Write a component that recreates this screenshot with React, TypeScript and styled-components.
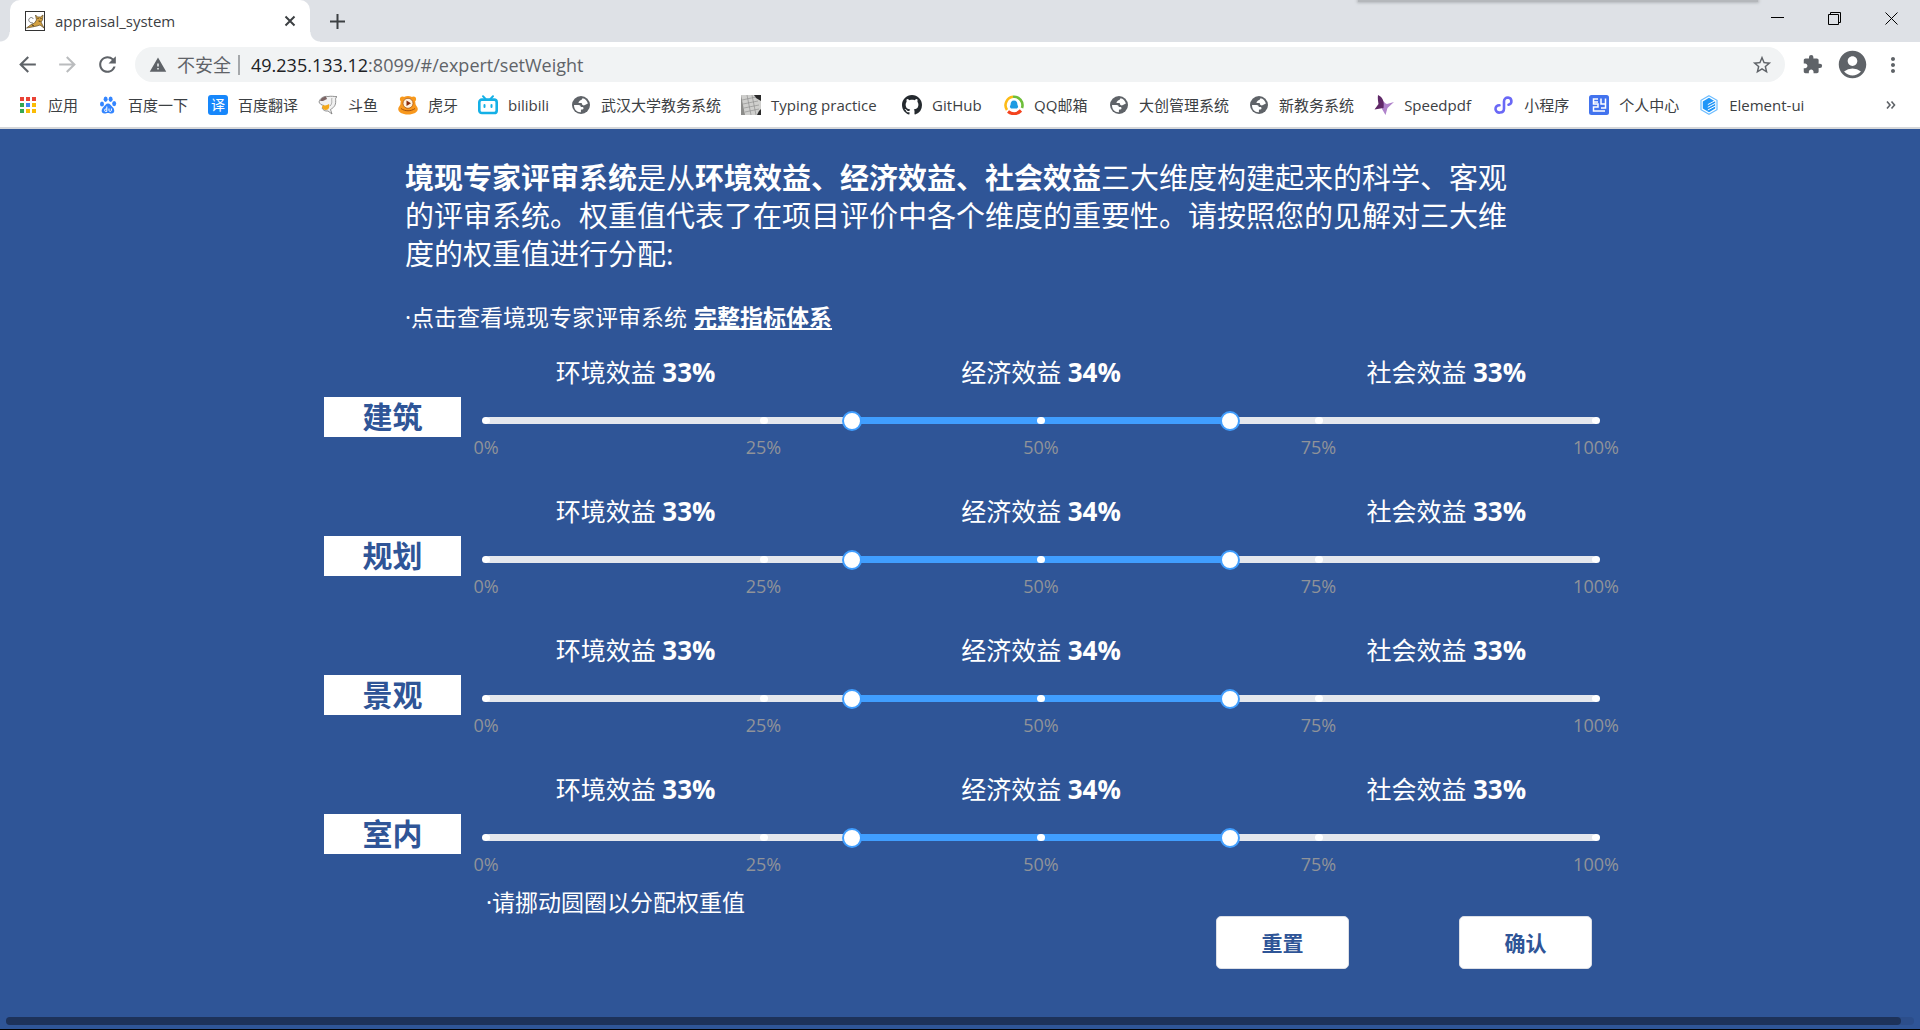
import React, { useState } from 'react';
import styled, { createGlobalStyle } from 'styled-components';
import {
  MdArrowBack,
  MdArrowForward,
  MdRefresh,
  MdWarning,
  MdStarBorder,
  MdExtension,
  MdAccountCircle,
  MdMoreVert,
} from 'react-icons/md';

const navy = '#2f5597';
const blue = '#409eff';

const GlobalStyle = createGlobalStyle`
  *, *::before, *::after { box-sizing: border-box; }
  body {
    margin: 0;
    background: ${navy};
    font-family: "Open Sans", "Noto Sans CJK SC", sans-serif;
  }
  button { font-family: inherit; }
`;

const Window = styled.div`
  display: flex;
  flex-direction: column;
  min-height: 100vh;
  border-bottom: 1px solid #000;
`;

/* ---------- browser frame ---------- */

const TabStrip = styled.div`
  position: relative;
  display: flex;
  align-items: stretch;
  height: 42px;
  padding-left: 10px;
  background: #dee1e6;
`;

const TopShade = styled.div`
  position: absolute;
  top: 0;
  right: 162px;
  width: 400px;
  height: 2px;
  background: #b4b7bb;
  box-shadow: 0 0 3px 1px #b4b7bb;
`;

const Tab = styled.div`
  position: relative;
  display: flex;
  align-items: center;
  gap: 10px;
  width: 300px;
  padding: 0 14px 0 15px;
  border-radius: 10px 10px 0 0;
  background: #fff;
  color: #3c4043;
  font-size: 15px;
  line-height: 20px;

  &::before,
  &::after {
    content: '';
    position: absolute;
    bottom: 0;
    width: 10px;
    height: 10px;
  }
  &::before {
    left: -10px;
    background: radial-gradient(circle at 0 0, transparent 9px, #fff 10px);
  }
  &::after {
    right: -10px;
    background: radial-gradient(circle at 100% 0, transparent 9px, #fff 10px);
  }
`;

const TabTitle = styled.span`
  flex: 1;
`;

const IconButton = styled.button<{ $width: number; $color?: string }>`
  display: flex;
  align-items: center;
  justify-content: center;
  flex: none;
  width: ${(p) => p.$width}px;
  padding: 0;
  border: 0;
  background: transparent;
  color: ${(p) => p.$color ?? '#5f6368'};
`;

const WindowControls = styled.div`
  display: flex;
  margin-left: auto;
  padding-bottom: 5px;
`;

const Toolbar = styled.div`
  display: flex;
  align-items: center;
  height: 42px;
  padding: 3px 8px 0 7px;
  background: #fff;
`;

const AddressBar = styled.div`
  display: flex;
  align-items: center;
  flex: 1;
  height: 35px;
  margin: 0 8px;
  padding: 0 11px 0 14px;
  border-radius: 18px;
  background: #f1f3f4;
  color: #5f6368;
  font-size: 18px;
  line-height: 24px;
`;

const Insecure = styled.span`
  margin-left: 10px;
  padding-right: 7px;
`;

const Separator = styled.span`
  width: 2px;
  height: 20px;
  margin-right: 11px;
  background: #a5a8ab;
`;

const Url = styled.span`
  flex: 1;
`;

const Host = styled.span`
  color: #202124;
`;

const BookmarkBar = styled.nav`
  display: flex;
  align-items: center;
  gap: 20px;
  height: 45px;
  padding: 0 24px 1px 18px;
  border-bottom: 2px solid #d5d7da;
  background: #fff;
`;

const Bookmark = styled.a`
  display: flex;
  align-items: center;
  gap: 10px;
  color: #3c4043;
  font-size: 15px;
  line-height: 20px;
  text-decoration: none;
  white-space: nowrap;

  svg { flex: none; }
`;

const BookmarkLabel = styled.span<{ $minWidth?: number }>`
  min-width: ${(p) => p.$minWidth ?? 30}px;
`;

const More = styled.span`
  margin-left: auto;
  display: flex;
`;

/* ---------- page ---------- */

const Page = styled.main`
  display: flex;
  flex-direction: column;
  flex: 1;
  background: ${navy};
  color: #fff;
`;

const Content = styled.div`
  flex: 1;
  width: 66.25%;
  margin: 0 auto;
  padding-top: 30px;
`;

const Intro = styled.p`
  margin: 0 80px 0 81px;
  font-size: 29px;
  line-height: 38px;
`;

const Hint = styled.p`
  margin: 29px 0 22px 81px;
  font-size: 23px;
  line-height: 30px;
`;

const HintLink = styled.a`
  margin-left: 7px;
  color: #fff;
  font-weight: 700;
  text-decoration: underline;
`;

const Rows = styled.div`
  display: flex;
  flex-direction: column;
  gap: 32px;
`;

const Row = styled.section`
  display: grid;
  grid-template-columns: 137px 1fr;
  column-gap: 25px;
  align-items: start;
`;

const Name = styled.h2`
  margin: 43px 0 0;
  background: #fff;
  color: ${navy};
  font-size: 30px;
  font-weight: 700;
  line-height: 40px;
  text-align: center;
`;

const Shares = styled.div`
  display: grid;
  grid-template-columns: repeat(3, 1fr);
  margin: 0 -53px;
  font-size: 25px;
  line-height: 36px;
  text-align: center;
`;

const Percent = styled.b`
  font-size: 26px;
`;

const Track = styled.div`
  position: relative;
  height: 7px;
  margin-top: 27px;
  border-radius: 4px;
  background: #e4e7ed;
`;

const Fill = styled.div`
  height: 7px;
  background: ${blue};
`;

const Stops = styled.div`
  position: absolute;
  inset: 0;
  display: flex;
  justify-content: space-between;
`;

const StopSlot = styled.span`
  display: flex;
  justify-content: center;
  width: 0;
`;

const Stop = styled.span`
  flex: none;
  width: 8px;
  height: 7px;
  border-radius: 4px;
  background: #fff;
`;

const Handle = styled.input`
  position: absolute;
  top: -6px;
  left: -10px;
  width: calc(100% + 20px);
  height: 20px;
  margin: 0;
  background: transparent;
  appearance: none;
  pointer-events: none;

  &::-webkit-slider-thumb {
    appearance: none;
    width: 20px;
    height: 20px;
    border: 2px solid ${blue};
    border-radius: 50%;
    background: #fff;
    pointer-events: auto;
    cursor: grab;
  }
`;

const Marks = styled.div`
  display: flex;
  justify-content: space-between;
  margin-top: 10px;
  color: #909399;
  font-size: 18px;
  line-height: 27px;
`;

const Mark = styled.span`
  display: flex;
  justify-content: center;
  width: 0;
`;

const Footer = styled.div`
  display: flex;
  align-items: flex-start;
  justify-content: space-between;
  margin-top: 9px;
  padding: 0 4px 0 162px;
`;

const Note = styled.p`
  margin: 0;
  font-size: 23px;
  line-height: 30px;
`;

const Actions = styled.div`
  display: flex;
  gap: 110px;
  padding-top: 29px;
`;

const Action = styled.button`
  width: 133px;
  height: 53px;
  padding: 0 0 2px;
  border: 1px solid #dcdfe6;
  border-radius: 5px;
  background: #fff;
  color: ${navy};
  font-size: 21px;
  font-weight: 700;
`;

const ScrollTrack = styled.div`
  height: 8px;
  margin: 0 6px 4px;
  padding-right: 13px;
  border-radius: 4px;
  background: #2c4e8b;
`;

const ScrollThumb = styled.div`
  height: 8px;
  border-radius: 4px;
  background: #1d325a;
`;

/* ---------- icons ---------- */

const Icon = ({ children, box = 20 }: { children: React.ReactNode; box?: number }) => (
  <svg width="20" height="20" viewBox={`0 0 ${box} ${box}`} aria-hidden="true">
    {children}
  </svg>
);

const TomcatIcon = () => (
  <Icon>
    <rect x=".5" y=".5" width="19" height="19" fill="#fff" stroke="#333" />
    <path d="M8 12c-3 0-5-2-4-4s4-2 4 0" fill="none" stroke="#777" />
    <path d="M1.500 17l4-3 4-2 2-3-1-5 2 2h3l2.500-2-.5 5-1.500 2 3 6-4-3-3 1-5 1z" fill="#d2a041" stroke="#5b4a2a" strokeWidth=".7" />
    <path d="M12.500 7.500h1M15.500 7.500h1M13.500 10l2 .4M7 14l2 1" stroke="#3b2d16" strokeWidth=".9" />
  </Icon>
);

const AppsIcon = () => {
  const colors = ['#ea4335', '#ea4335', '#ea4335', '#34a853', '#4285f4', '#fbbc05', '#34a853', '#fbbc05', '#fbbc05'];
  return (
    <Icon>
      {colors.map((c, i) => (
        <rect key={i} x={2 + (i % 3) * 6} y={2 + Math.floor(i / 3) * 6} width="4" height="4" fill={c} />
      ))}
    </Icon>
  );
};

const BaiduIcon = () => (
  <Icon>
    <g fill="#3385ff">
      <ellipse cx="4" cy="9" rx="2" ry="2.600" />
      <ellipse cx="7.600" cy="4.300" rx="2" ry="2.700" />
      <ellipse cx="12.600" cy="4.300" rx="2" ry="2.700" />
      <ellipse cx="16.200" cy="8.600" rx="2" ry="2.600" />
      <path d="M10 8.500c2.200 0 2.800 2 4.500 3.600 2.300 2 2.700 6.400-1 6.400-1.800 0-2-.5-3.500-.5s-1.800.5-3.500.5c-3.700 0-3.400-4.300-1-6.400C7.200 10.500 7.800 8.500 10 8.500z" />
    </g>
    <path d="M8.800 11.500v5M8.800 14h-1a1.200 1.200 0 000 2.500h1M11 13.500v2c0 1.200 2.400 1.200 2.400 0v-2" fill="none" stroke="#fff" strokeWidth="1" />
  </Icon>
);

const TranslateIcon = () => (
  <Icon>
    <rect width="20" height="20" rx="3" fill="#1787fb" />
    <text x="10" y="15" textAnchor="middle" fontSize="14" fill="#fff" fontFamily="Noto Sans CJK SC">译</text>
  </Icon>
);

const DouyuIcon = () => (
  <Icon>
    <path d="M1 7C2 3 6 .8 10 1.500c3-.6 6 0 9 .2-1.500 1-1.500 2-1.300 4C18 11 15 13 12.500 14.500L14 19l-4-3c-3 .5-5-1-6-3l2-2.500C3 10 2 9 1 7z" fill="#f1f1f1" stroke="#777" strokeWidth=".8" />
    <path d="M2 6c1-3 3-4 6-4.500L9 4 5 6z" fill="#7b6464" />
    <path d="M5 10c2 1 4 .5 6-1 1 3-.5 6-3 6s-3.500-2-4-3z" fill="#f5a91b" />
    <path d="M14 3c-1 2 1 5-2 8" fill="none" stroke="#999" strokeWidth=".8" />
  </Icon>
);

const HuyaIcon = () => (
  <Icon>
    <circle cx="4.500" cy="4" r="2.600" fill="#f79a1c" />
    <circle cx="15.500" cy="4" r="2.600" fill="#f79a1c" />
    <path d="M10 1c5.500 0 7.500 4 7.500 8 0 1.500 2.300 2.500 2.300 5 0 3-4 5.500-9.800 5.500S.2 17 .2 14c0-2.500 2.300-3.500 2.300-5C2.500 5 4.500 1 10 1z" fill="#f8981d" />
    <circle cx="10" cy="8.300" r="5" fill="#fff3df" stroke="#a14a0a" strokeWidth=".7" />
    <path d="M8.500 5.500l4.500 2.800-4.500 2.700z" fill="#8c2a0a" />
    <path d="M3 13.500c4 3 10 3 14 0" fill="none" stroke="#a3500e" />
  </Icon>
);

const BilibiliIcon = () => (
  <Icon>
    <path d="M5 1.200L7.500 4M15 1.200L12.500 4" stroke="#14b0e6" strokeWidth="2" strokeLinecap="round" />
    <rect x="1.300" y="4.600" width="17.400" height="13.400" rx="2.600" fill="#fff" stroke="#14b0e6" strokeWidth="2.600" />
    <path d="M6.500 10v2M13.500 10v2" stroke="#14b0e6" strokeWidth="2" strokeLinecap="round" />
  </Icon>
);

const GlobeIcon = () => (
  <Icon>
    <circle cx="10" cy="10" r="9" fill="#5f6368" />
    <path d="M11.500 3.200c2.500.4 4.800 2.600 5.400 5.300l-3.400 1.800c-1 .5-2.500-.3-2.500-1.300 0-.7-.5-1-1.200-1H8.200c-.6 0-.9-.6-.5-1L9 5.500c.7-.6 1.900-.3 2.500-2.300zM3 10h4.500c1.500 0 2.300.8 2.300 2h1.500c.7 0 1.200.5 1.200 1.200 0 1-.8 1.300-1.700 1.300-.7 0-.9.500-.9 1.200v1.500C6 17.500 3 14.500 3 10z" fill="#fff" />
  </Icon>
);

const KeyboardIcon = () => (
  <Icon>
    <path d="M0 0h20v20H0z" fill="#cfcfcd" />
    <path d="M13 0h7v6l-5-3zM18 16l2-2v6h-4z" fill="#2b2b2b" />
    <path d="M0 0l4 20H0z" fill="#8c8c8a" />
    <path d="M1 5l14-3M2 9l15-3M3 13l15-3M4 17l14-3M6 0l4 20M11 0l4 20" stroke="#888" strokeWidth=".6" />
  </Icon>
);

const GithubIcon = () => (
  <Icon box={16}>
    <path
      fill="#24292e"
      d="M8 0C3.580 0 0 3.580 0 8c0 3.540 2.290 6.530 5.470 7.590.4.070.55-.17.55-.38 0-.19-.01-.82-.01-1.490-2.010.37-2.530-.49-2.690-.94-.09-.23-.48-.94-.82-1.130-.28-.15-.68-.52-.01-.53.63-.01 1.080.58 1.230.82.72 1.210 1.870.87 2.330.66.070-.52.28-.87.51-1.070-1.780-.2-3.640-.89-3.640-3.950 0-.87.31-1.590.82-2.150-.08-.2-.36-1.020.08-2.120 0 0 .67-.21 2.200.82.64-.18 1.320-.27 2-.27s1.360.09 2 .27c1.530-1.040 2.200-.82 2.200-.82.44 1.100.16 1.920.08 2.120.51.56.82 1.270.82 2.150 0 3.070-1.870 3.750-3.650 3.950.29.25.54.73.54 1.480 0 1.070-.01 1.930-.01 2.200 0 .21.15.46.55.38A8.010 8.010 0 0016 8c0-4.420-3.580-8-8-8z"
    />
  </Icon>
);

const QQMailIcon = () => (
  <Icon>
    <path d="M9 1.800A8.500 8.500 0 003 15" fill="none" stroke="#fdbb16" strokeWidth="2.600" />
    <path d="M9 1.800A8.500 8.500 0 0118 13" fill="none" stroke="#6ebe3a" strokeWidth="2.600" />
    <path d="M4 16.500c4 3 9 3 13-1" fill="none" stroke="#f4431e" strokeWidth="3.200" />
    <path d="M10 5.500c2.500 0 3.400 2 3.400 4l.8 2.500-1.200 1.500H7L5.800 12l.8-2.500c0-2 .9-4 3.400-4z" fill="#1d9be2" />
  </Icon>
);

const SpeedpdfIcon = () => (
  <Icon>
    <path d="M20 7l-6.500 6-2 7-3.500-6 1-8c2 2 3 3 4 3z" fill="#b083cb" />
    <path d="M4 0c5 2 6.500 7 5.500 13l-9 1.500L4.500 9C4 6 3.500 3 4 0z" fill="#5f2867" />
  </Icon>
);

const MiniProgramIcon = () => (
  <Icon>
    <path d="M5.500 10.200A3.700 3.700 0 106 17.500c2.400 0 4-1.500 4-4V6.500c0-2.500 1.600-4 4-4a3.700 3.700 0 01.5 7.300" fill="none" stroke="#6a68f6" strokeWidth="2.600" strokeLinecap="round" />
  </Icon>
);

const PersonalIcon = () => (
  <Icon>
    <rect width="20" height="20" rx="2.500" fill="#4273ee" />
    <path d="M9 4H4.500v5H9v3H4.500v4H16M12 3.500V9h4.500M16.500 3.500V13H12M4 7h5" fill="none" stroke="#fff" strokeWidth="1.500" />
  </Icon>
);

const ElementIcon = () => (
  <Icon>
    <path d="M10 .7l8 4.600v9.400l-8 4.600-8-4.600V5.300z" fill="#fff" stroke="#6bbcff" strokeWidth="1.200" />
    <path d="M10 2.800l6.200 3.600v7.200L10 17.200l-6.200-3.600V6.400z" fill="#2196f8" />
    <path d="M8.800 9.600l7.500-4M8.800 12.300l7.500-4M8.800 15l7.500-4" stroke="#fff" strokeWidth="1" />
  </Icon>
);

/* ---------- data ---------- */

const bookmarks: { label: string; icon: () => React.ReactElement; minWidth?: number }[] = [
  { label: '应用', icon: AppsIcon },
  { label: '百度一下', icon: BaiduIcon },
  { label: '百度翻译', icon: TranslateIcon },
  { label: '斗鱼', icon: DouyuIcon },
  { label: '虎牙', icon: HuyaIcon },
  { label: 'bilibili', icon: BilibiliIcon, minWidth: 43 },
  { label: '武汉大学教务系统', icon: GlobeIcon },
  { label: 'Typing practice', icon: KeyboardIcon, minWidth: 111 },
  { label: 'GitHub', icon: GithubIcon, minWidth: 52 },
  { label: 'QQ邮箱', icon: QQMailIcon, minWidth: 55 },
  { label: '大创管理系统', icon: GlobeIcon },
  { label: '新教务系统', icon: GlobeIcon },
  { label: 'Speedpdf', icon: SpeedpdfIcon, minWidth: 70 },
  { label: '小程序', icon: MiniProgramIcon },
  { label: '个人中心', icon: PersonalIcon },
  { label: 'Element-ui', icon: ElementIcon },
];

const categories = ['建筑', '规划', '景观', '室内'];
const marks = [0, 25, 50, 75, 100];
const initialRange: [number, number] = [33, 67];

/* ---------- components ---------- */

const BrowserFrame = () => (
  <header>
    <TabStrip>
      <Tab>
        <TomcatIcon />
        <TabTitle>appraisal_system</TabTitle>
        <IconButton $width={12} $color="#3c4043" aria-label="关闭标签页">
          <svg width="12" height="12" viewBox="0 0 12 12">
            <path d="M1.500 1.500l9 9M10.500 1.500l-9 9" stroke="currentColor" strokeWidth="2" />
          </svg>
        </IconButton>
      </Tab>
      <IconButton $width={55} $color="#3c4043" aria-label="新标签页">
        <svg width="15" height="15" viewBox="0 0 15 15">
          <path d="M7.500 0v15M0 7.500h15" stroke="currentColor" strokeWidth="2" />
        </svg>
      </IconButton>
      <TopShade />
      <WindowControls>
        <IconButton $width={57} $color="#000" aria-label="最小化">
          <svg width="13" height="13"><path d="M0 5.500h13" stroke="currentColor" /></svg>
        </IconButton>
        <IconButton $width={57} $color="#000" aria-label="还原">
          <svg width="13" height="13" fill="none" stroke="currentColor">
            <path d="M.5 2.500h10v10H.5zM2.500 2.500v-2h10v10h-2" />
          </svg>
        </IconButton>
        <IconButton $width={57} $color="#000" aria-label="关闭">
          <svg width="13" height="13"><path d="M.5.5l12 12M12.500.5l-12 12" stroke="currentColor" /></svg>
        </IconButton>
      </WindowControls>
    </TabStrip>
    <Toolbar>
      <IconButton $width={40} aria-label="后退"><MdArrowBack size={25} /></IconButton>
      <IconButton $width={40} $color="#babcbe" aria-label="前进"><MdArrowForward size={25} /></IconButton>
      <IconButton $width={40} aria-label="刷新"><MdRefresh size={25} /></IconButton>
      <AddressBar>
        <MdWarning size={18} />
        <Insecure>不安全</Insecure>
        <Separator />
        <Url><Host>49.235.133.12</Host>:8099/#/expert/setWeight</Url>
        <IconButton $width={24} aria-label="收藏"><MdStarBorder size={22} /></IconButton>
      </AddressBar>
      <IconButton $width={38} aria-label="扩展程序"><MdExtension size={21} /></IconButton>
      <IconButton $width={43} aria-label="用户"><MdAccountCircle size={33} /></IconButton>
      <IconButton $width={38} aria-label="菜单"><MdMoreVert size={24} /></IconButton>
    </Toolbar>
    <BookmarkBar>
      {bookmarks.map(({ label, icon: BookmarkIcon, minWidth }) => (
        <Bookmark key={label} href="#">
          <BookmarkIcon />
          <BookmarkLabel $minWidth={minWidth}>{label}</BookmarkLabel>
        </Bookmark>
      ))}
      <More>
        <svg width="10" height="8" viewBox="0 0 10 8" fill="none" stroke="#5f6368" strokeWidth="1.600">
          <path d="M1 .5L4 4 1 7.500M5.500.5l3 3.500-3 3.500" />
        </svg>
      </More>
    </BookmarkBar>
  </header>
);

interface WeightRowProps {
  name: string;
  range: [number, number];
  onChange: (range: [number, number]) => void;
}

const WeightRow = ({ name, range, onChange }: WeightRowProps) => {
  const [low, high] = range;
  return (
    <Row>
      <Name>{name}</Name>
      <div>
        <Shares>
          <span>环境效益 <Percent>{low}%</Percent></span>
          <span>经济效益 <Percent>{high - low}%</Percent></span>
          <span>社会效益 <Percent>{100 - high}%</Percent></span>
        </Shares>
        <Track>
          <Fill style={{ marginLeft: `${low}%`, width: `${high - low}%` }} />
          <Stops>
            {marks.map((m) => (
              <StopSlot key={m}><Stop /></StopSlot>
            ))}
          </Stops>
          <Handle
            type="range"
            aria-label={`${name} 环境效益`}
            value={low}
            onChange={(e) => onChange([Math.min(+e.target.value, high), high])}
          />
          <Handle
            type="range"
            aria-label={`${name} 社会效益`}
            value={high}
            onChange={(e) => onChange([low, Math.max(+e.target.value, low)])}
          />
        </Track>
        <Marks>
          {marks.map((m) => (
            <Mark key={m}>{m}%</Mark>
          ))}
        </Marks>
      </div>
    </Row>
  );
};

export default function App() {
  const [ranges, setRanges] = useState(categories.map(() => initialRange));

  return (
    <Window>
      <GlobalStyle />
      <BrowserFrame />
      <Page>
        <Content>
          <Intro>
            <b>境现专家评审系统</b>是从<b>环境效益、经济效益、社会效益</b>
            三大维度构建起来的科学、客观的评审系统。权重值代表了在项目评价中各个维度的重要性。请按照您的见解对三大维度的权重值进行分配:
          </Intro>
          <Hint>
            ·点击查看境现专家评审系统<HintLink href="#">完整指标体系</HintLink>
          </Hint>
          <Rows>
            {categories.map((name, i) => (
              <WeightRow
                key={name}
                name={name}
                range={ranges[i]}
                onChange={(next) => setRanges(ranges.map((r, j) => (j === i ? next : r)))}
              />
            ))}
          </Rows>
          <Footer>
            <Note>·请挪动圆圈以分配权重值</Note>
            <Actions>
              <Action type="button" onClick={() => setRanges(categories.map(() => initialRange))}>重置</Action>
              <Action type="button">确认</Action>
            </Actions>
          </Footer>
        </Content>
        <ScrollTrack>
          <ScrollThumb />
        </ScrollTrack>
      </Page>
    </Window>
  );
}
